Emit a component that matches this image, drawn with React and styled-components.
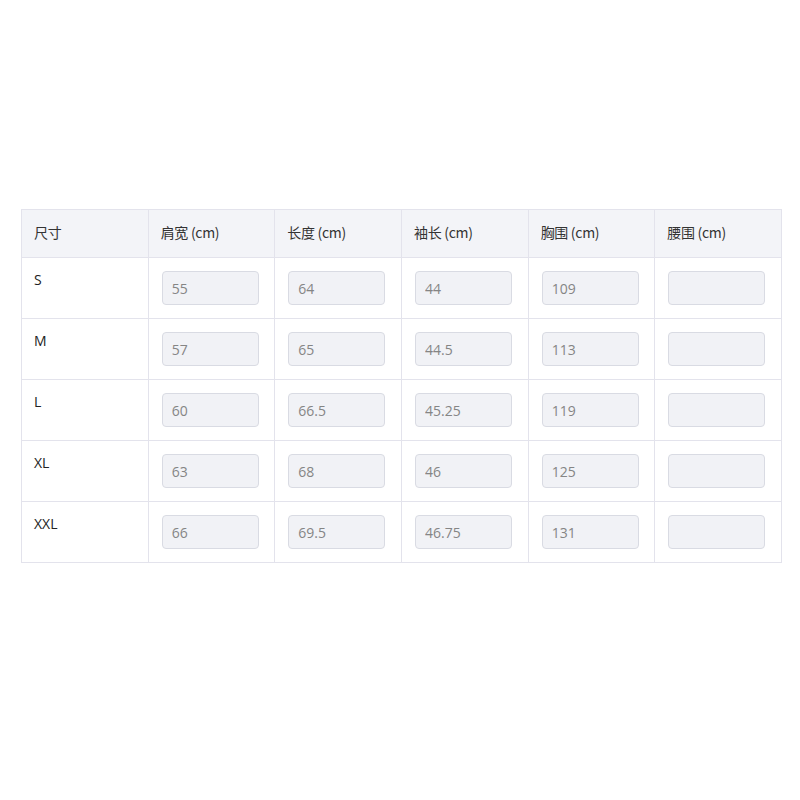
import React from "react";
import styled, { createGlobalStyle } from "styled-components";

const GlobalStyle = createGlobalStyle`
  body {
    margin: 0;
    background: #ffffff;
    font-family: "Open Sans", "Noto Sans CJK SC", sans-serif;
    color: #222;
  }
`;

const Page = styled.div`
  padding: 209px 0 0 21px;
`;

const Table = styled.table`
  width: 761px;
  border-collapse: collapse;
  table-layout: fixed;
  font-size: 14px;
`;

const HeadRow = styled.tr`
  height: 48px;
`;

const Row = styled.tr`
  height: 61px;
`;

const HeadCell = styled.th`
  padding: 0 12px 3px;
  text-align: left;
  font-weight: 400;
  color: #333;
  background: #f3f4f8;
  border: 1px solid #e3e3ec;
  font-family: "Noto Sans CJK SC", "Open Sans", sans-serif;
  font-size: 14px;
  letter-spacing: -0.3px;
`;

const LabelCell = styled.td`
  padding: 12px 12px 0;
  vertical-align: top;
  border: 1px solid #e3e3ec;
  color: #222;
  font-size: 14px;
`;

const Cell = styled.td`
  padding: 0 13px;
  vertical-align: middle;
  border: 1px solid #e3e3ec;
`;

const Field = styled.input`
  box-sizing: border-box;
  display: block;
  width: 97px;
  height: 34px;
  padding: 0 9px;
  border: 1px solid #d9dbe3;
  border-radius: 4px;
  background: #f1f2f6;
  color: #858585;
  font-family: "Open Sans", sans-serif;
  font-size: 14px;
  outline: none;
`;

const headers = ["尺寸", "肩宽 (cm)", "长度 (cm)", "袖长 (cm)", "胸围 (cm)", "腰围 (cm)"];

const rows = [
  { size: "S", values: ["55", "64", "44", "109", ""] },
  { size: "M", values: ["57", "65", "44.5", "113", ""] },
  { size: "L", values: ["60", "66.5", "45.25", "119", ""] },
  { size: "XL", values: ["63", "68", "46", "125", ""] },
  { size: "XXL", values: ["66", "69.5", "46.75", "131", ""] },
];

export default function App() {
  return (
    <Page>
      <GlobalStyle />
      <Table>
        <thead>
          <HeadRow>
            {headers.map((h) => (
              <HeadCell key={h}>{h}</HeadCell>
            ))}
          </HeadRow>
        </thead>
        <tbody>
          {rows.map((r) => (
            <Row key={r.size}>
              <LabelCell>{r.size}</LabelCell>
              {r.values.map((v, i) => (
                <Cell key={i}>
                  <Field defaultValue={v} disabled />
                </Cell>
              ))}
            </Row>
          ))}
        </tbody>
      </Table>
    </Page>
  );
}
